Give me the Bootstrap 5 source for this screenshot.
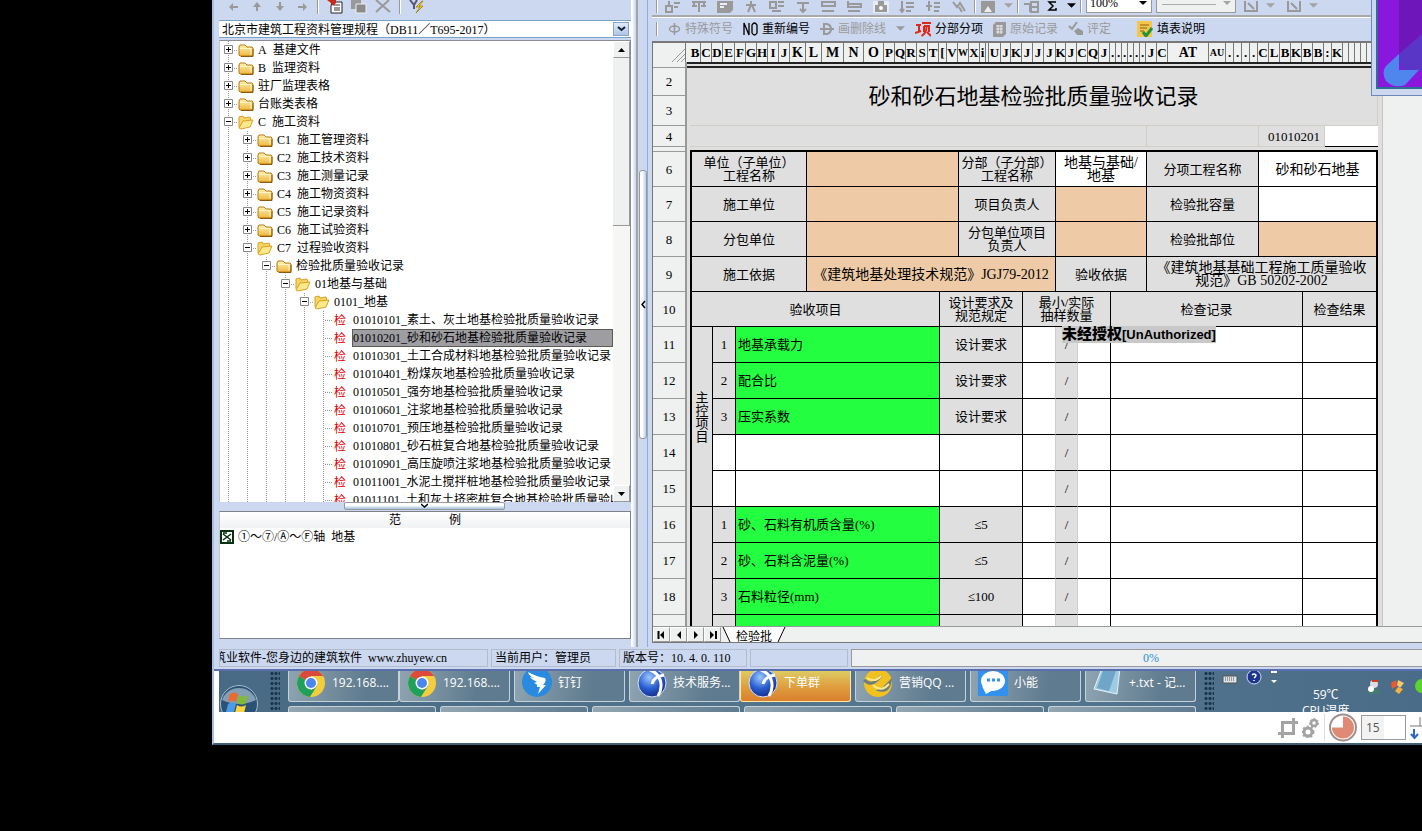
<!DOCTYPE html>
<html lang="zh-CN">
<head>
<meta charset="utf-8">
<meta name="viewport" content="width=device-width, initial-scale=1">
<title>砂和砂石地基检验批质量验收记录</title>
<link href="https://cdn.jsdelivr.net/npm/bootstrap@5.3.0/dist/css/bootstrap.min.css" rel="stylesheet">
<style>
:root{--face:#ccd8f0;--paper:#dfdfdf;--ctl:#eef1f0;--edge:#9a9a9a;--peach:#eecaa6;--go:#23fe40}
body{background:#000;margin:0;overflow:hidden;color:#000;font:12px/18px "Liberation Serif","Noto Sans CJK SC",serif}
a{color:inherit;text-decoration:none}
button{font:inherit;color:inherit;background:none;border:0;padding:0}
svg{display:block;flex:none}
.desk{height:calc(100vh - 86px);margin-left:212px;border-left:2px solid #a9bfe0;border-bottom:2px solid #3f5f78;background:#fff;position:relative;overflow:hidden}
.app{background:var(--face);padding-left:5px;min-height:0}
.status-row{background:var(--face);border-bottom:2px solid #5b6fae;height:24px;padding:1px 0 1px 5px}
.pane-left{width:412px}
.tools-left{height:20px;padding:0 8px 6px;gap:8px}
.combo{height:18px;border-top:1px solid #7ba3c8;border-bottom:1px solid #7ba3c8;border-radius:0;background:#fff}
.combo select,.zoomsel,.linesel{appearance:none;border:0;background:transparent;font:inherit;padding:0 3px;outline:0;color:#000}
.combo .drop{width:16px;height:14px;margin:1px 2px 1px 0;background:linear-gradient(#e2ebfa,#adc4e6);border:1px solid #8aa4cc}
.tree{margin-top:2px;border:1px solid #8c8c94;border-left-color:#c4c8cc;border-bottom:0;background:#fff;min-height:0}
.tree-list{min-width:0;overflow:hidden;margin:0 0 0 -1px;padding:0;list-style:none;white-space:nowrap}
.tree-list a{display:flex;height:18px;align-items:stretch}
.tree-list .txt{padding-left:4px}
.leaf .txt{margin-left:5px;padding:0 1px;flex:1;overflow:hidden}
.leaf.on .txt{background:#9e9da2;box-shadow:inset 0 0 0 1px #5b5b54}
.guide{width:19px;flex:none;background:repeating-linear-gradient(#999 0 1px,#fff 1px 2px) 9px 0/1px 100% no-repeat}
.guide.arm{background:repeating-linear-gradient(#999 0 1px,#fff 1px 2px) 9px 0/1px 100% no-repeat,repeating-linear-gradient(90deg,#999 0 1px,#fff 1px 2px) 9px 9px/10px 1px no-repeat}
.tick{color:#e00000;width:14px;flex:none;padding-left:1px;line-height:20px}
.sbar{width:17px;flex:none;background:#f6f6f5}
.sbar button,.navbtn{width:17px;height:17px;background:var(--ctl);border:1px solid #fff;border-right-color:#999;border-bottom-color:#999}
.sbar .thumb{height:168px;background:var(--ctl);border-right:1px solid #999;border-bottom:1px solid #999}
.grab-h{height:9px;flex:none}
.grab-h div{width:161px;height:8px;margin-left:125px;border:1px solid #999;border-radius:2px;background:linear-gradient(#fff 40%,#9fbfe0)}
.sample{height:128px;flex:none;border:1px solid #808088;border-left-color:#c4c8cc;background:#fff;margin-bottom:8px}
.sample h2{font:inherit;height:16px;line-height:16px;margin:0;background:linear-gradient(#fff,#f0f1f3);gap:48px}
.divider{width:21px;flex:none}
.divider .rail{width:7px;border-left:1px solid #fff;border-right:2px solid #a5a5a5;background:linear-gradient(90deg,#fff,#c3d3ee)}
.divider .slot{width:10px;border-right:1px solid #91abd8}
.divider .knob{margin:170px 0 0 1px;height:269px;border:1px solid #999;border-radius:3px;background:linear-gradient(90deg,#fff 40%,#b4cbe8)}
.pane-right{min-width:0}
.tb-one{height:15px;overflow:hidden;padding:0 4px 2px;gap:7px;color:#a3a3a3}
.icon-run{gap:10px}
.vsep{width:2px;height:14px;flex:none;background:#999;border-right:1px solid #fff}
.zoombox{height:20px;border:1px solid #999;background:#fff;width:66px}
.linebox{height:20px;border:1px solid #999;background:linear-gradient(#aaa,#aaa) 5px 10px/54px 1px no-repeat var(--ctl);width:80px}
.tb-two{height:26px;border-top:2px solid #a9a9ac;padding:0 4px;gap:10px;color:#9a9a9a;box-shadow:inset 0 1px #fff;white-space:nowrap}
.tb-two button{display:flex;align-items:center;gap:4px}
.tb-two .live{color:#000}
.sheet-frame{border-left:1px solid #777;border-top:2px solid #777;background:var(--ctl);min-height:0;margin-bottom:4px}
.heads{height:19px;background:var(--ctl);flex:none;overflow:hidden;font:bold 13px/19px "Liberation Serif",serif}
.heads span{flex:none;display:flex;justify-content:center;overflow:hidden;border-right:1px solid #777}
.heads .wide{font-size:14px}
.heads .snug{font-size:10px}
.heads .corner{width:33px}
.heads .pad{width:4px;border:0}
.view{min-height:0;overflow:hidden;flex:1 1 0}
.page-area{width:730px;background:var(--paper);border-right:1px solid #c8c4be}
.grid{table-layout:fixed;width:725px;border-collapse:separate;border-spacing:0;font-size:13px;line-height:13px;text-align:center;color:#000}
.grid td,.grid th{padding:0;vertical-align:middle;font-weight:400;overflow:hidden}
.grid tr>*{height:35px}
.grid td{border-right:1px solid #000;border-bottom:1px solid #000}
.grid th{background:var(--ctl);border-right:2px solid #999;border-bottom:1px solid #999}
.grid tr.tall>*{height:36px}
.grid tr.r1>*{height:6px}
.grid tr.r2>*{height:28px}
.grid tr.r3>*{height:30px}
.grid tr.r4>*{height:21px}
.grid tr.r5>*{height:5px}
.grid td.rule{border-top:2px solid #222;border-bottom:2px solid #222;border-right:0}
.grid td.none{border:0}
.grid td.faint{border-color:#d2cdc6}
.grid td.first{border-left:2px solid #000}
.grid td.last{border-right:2px solid #000}
.grid td.over{border-right:0;border-bottom-width:2px}
.grid .p{background:var(--peach)}
.grid .g{background:var(--go);text-align:left;padding-left:2px}
.grid .w{background:#fff}
.grid .k{font-size:14px}
.grid td.nb{border-right-color:#d2cdc6}
.grid .caption-cell{font-size:22px;line-height:26px}
.grid td.host{position:relative;overflow:visible}
.stamp{position:absolute;left:6px;top:-1px;background:#c8c8c8;font:bold 13px/16px "Liberation Sans","Noto Sans CJK SC",sans-serif;white-space:nowrap;z-index:2}
.stamp b{font-size:15px}
.tabs{height:17px;flex:none;border-top:1px solid #999;border-bottom:1px solid #777}
.tabs .navbtn{height:15px}
.cellbox{height:18px;border:1px solid #b3bccb;white-space:nowrap;overflow:hidden;padding-left:3px;line-height:17px;flex:none;margin-right:3px}
.meter{height:18px;border:1px solid #999;border-right:0;border-radius:0;background:var(--ctl);color:#2a8fdc;padding-left:28px;font-size:12px}
.taskbar{height:41px;flex:none;margin-left:5px;background:linear-gradient(90deg,#496a85,#55778f 60%,#4b6c88);overflow:hidden;color:#fff;font:12px/20px "Open Sans","Noto Sans CJK SC",sans-serif}
.taskbar>*{flex:none}
.grip{width:10px;background:radial-gradient(circle,#17324a 1px,transparent 2px) 0 0/4px 5px}
.task{width:111px;height:31px;border:1px solid #c5d2da;border-top:0;border-radius:0 0 3px 3px;background:linear-gradient(100deg,#8fa4b1,#5f7b8f 70%);gap:6px;padding:0 0 6px 7px;white-space:nowrap;display:flex;align-items:center;overflow:hidden}
.task.hot{background:linear-gradient(#dccb62,#e0a040 50%,#d97f2e);border-color:#ffe9a0}
.task-lo{height:6px;flex:1;border:1px solid #c5d2da;border-bottom:0;border-radius:3px 3px 0 0;background:linear-gradient(90deg,#93a6b2,#5f7b8f)}
.gauge{line-height:16px}
.strip{flex:none;height:31px;margin-left:5px;background:#fff;gap:4px}
.strip .bar{width:1px;height:27px;background:#ddd}
.strip .form-control{width:45px;height:25px;border:1px solid #999;border-radius:0;padding:0 4px;font:12px/20px "Open Sans",sans-serif;color:#555;background:linear-gradient(90deg,#f3f3f3 22px,#fff 22px)}
.popup{position:absolute;right:0;top:0;width:51px;height:96px;background:var(--face);border:1px solid #6f87b5;border-top:0;border-right:0;padding:0 0 5px 4px}
.popup svg{border-left:2px solid #2b6f95;border-bottom:2px solid #2b6f95}
</style>
</head>
<body>
<svg width="0" height="0" class="position-absolute">
 <defs>
  <linearGradient id="gold" x1="0" y1="0" x2="0" y2="1"><stop offset="0" stop-color="#fff3b4"/><stop offset="1" stop-color="#eeb640"/></linearGradient>
  <radialGradient id="sky" cx=".4" cy=".3" r=".8"><stop offset="0" stop-color="#9cc8ff"/><stop offset=".5" stop-color="#2a5ed0"/><stop offset="1" stop-color="#10207a"/></radialGradient>
  <symbol id="closed" viewBox="0 0 16 18"><path d="M1 14V6l1-2h5l2 2h5l1 1v7l-1 1H2z" fill="url(#gold)" stroke="#b9770e"/><path d="M2 7.500h11v6" fill="none" stroke="#fff6c8"/><path d="M3 15.500h12V8" fill="none" stroke="#8a5a10"/></symbol>
  <symbol id="open" viewBox="0 0 16 18"><path d="M1 14V4l4-1 1 2 6-1 1 3" fill="#f6d564" stroke="#d9a126"/><path d="M1 15l4-7 10-1-3 7-9 2z" fill="#fbe88a" stroke="#d9a126"/></symbol>
  <symbol id="chrome" viewBox="0 0 30 30"><circle cx="15" cy="15" r="14" fill="#f4cd3c"/><path d="M15 15L2.900 8a14 14 0 0 1 24.200 0z" fill="#db4a3b"/><path d="M15 15L2.900 8a14 14 0 0 0 11 21l7-11z" fill="#1fa15c"/><path d="M27.100 8H15v14z" fill="#f4cd3c"/><circle cx="15" cy="15" r="6.500" fill="#fff"/><circle cx="15" cy="15" r="5" fill="#4b85ee"/></symbol>
  <symbol id="globe" viewBox="0 0 30 30"><circle cx="15" cy="15" r="14" fill="url(#sky)" stroke="#d5e2ff"/><path d="M13 2c11 4 14 16 8 26M27 7c-7 1-11 5-12 9" stroke="#fff" stroke-width="3" fill="none"/></symbol>
  <symbol id="down" viewBox="0 0 10 6"><path d="M0 0h10L5 5z" fill="currentColor"/></symbol>
 </defs>
</svg>

<main class="desk d-flex flex-column">
 <div class="app d-flex flex-grow-1">
  <section class="pane-left d-flex flex-column flex-shrink-0">
   <div class="tools-left d-flex align-items-center">
    <button aria-label="后退"><svg width="14" height="10"><path d="M2 5l4-4v3h5v2H6v3z" fill="#999"/></svg></button>
    <button aria-label="上移"><svg width="16" height="10"><path d="M8 0l4 5H9v4H7V5H4z" fill="#999"/></svg></button>
    <button aria-label="下移"><svg width="14" height="10"><path d="M7 9L3 4h3V0h2v4h3z" fill="#999"/></svg></button>
    <button aria-label="前进"><svg width="14" height="10"><path d="M12 5L8 1v3H3v2h5v3z" fill="#999"/></svg></button>
    <span class="vsep"></span>
    <button aria-label="新建"><svg width="16" height="14"><path d="M5 2h10v11H4V6z" fill="#fff" stroke="#222"/><path d="M7 5h6M7 8h6M7 10h6" stroke="#333"/><path d="M0 0h9v3L6 6 4 3z" fill="#c8281a"/></svg></button>
    <button aria-label="复制"><svg width="16" height="14"><path d="M0 0h10v9H0z" fill="#999"/><path d="M5 4h10v9H5z" fill="#8b8b8b" stroke="#eee"/></svg></button>
    <button aria-label="删除"><svg width="16" height="14"><path d="M1 0l14 12M14 0L1 12" stroke="#999" stroke-width="2"/></svg></button>
    <span class="vsep"></span>
    <button aria-label="筛选"><svg width="16" height="14"><path d="M1 0l4 5v4M8 0L5 5" stroke="#557" stroke-width="2" fill="none"/><path d="M13 1L7 7h4l-4 6 7-7h-4l4-5z" fill="#ffd42a" stroke="#907000" stroke-width=".7"/></svg></button>
   </div>
   <div class="combo d-flex">
    <select class="flex-grow-1" aria-label="资料管理规程"><option>北京市建筑工程资料管理规程（DB11／T695-2017）</option></select>
    <button class="drop d-flex align-items-center justify-content-center" aria-label="展开"><svg width="9" height="6"><path d="M1 1l3.500 3L8 1" stroke="#123" stroke-width="2" fill="none"/></svg></button>
   </div>
   <div class="tree d-flex flex-grow-1">
    <ul class="tree-list flex-grow-1" id="tree"></ul>
    <div class="sbar d-flex flex-column">
     <button class="d-flex align-items-center justify-content-center" aria-label="向上滚动"><svg width="7" height="4"><path d="M0 4h7L3.500 0z"/></svg></button>
     <div class="thumb"></div>
     <button class="mt-auto d-flex align-items-center justify-content-center" aria-label="向下滚动"><svg width="7" height="4"><path d="M0 0h7L3.500 4z"/></svg></button>
    </div>
   </div>
   <div class="grab-h"><div class="d-flex justify-content-center"><svg width="7" height="5"><path d="M0 1l3.500 3L7 1" stroke="#000" stroke-width="1.500" fill="none"/></svg></div></div>
   <div class="sample">
    <h2 class="d-flex justify-content-center"><span>范</span><span>例</span></h2>
    <a href="#" class="d-flex align-items-center gap-1"><svg width="14" height="14"><path d="M1 1h12v12H1z" fill="#fff" stroke="#0a3010" stroke-width="2"/><path d="M3 4l8 6M11 4l-8 6M3 3h4M7 11h4" stroke="#0a3010" stroke-width="1.500"/></svg><span>①～⑦/Ⓐ～Ⓕ轴&nbsp; 地基</span></a>
   </div>
  </section>

  <div class="divider d-flex">
   <div class="rail"></div>
   <div class="slot"><div class="knob d-flex align-items-center"><svg width="7" height="9"><path d="M5 1L2 4.500 5 8" stroke="#000" stroke-width="1.500" fill="none"/></svg></div></div>
  </div>

  <section class="pane-right d-flex flex-column flex-grow-1">
   <div class="tb-one d-flex align-items-end">
    <span class="vsep"></span>
    <div class="icon-run d-flex align-items-end">
     <svg width="16" height="12"><path d="M1 5h6v6H1zM9 2h6M9 6h4M4 0v4" stroke="#999" stroke-width="2" fill="none"/></svg>
     <svg width="16" height="12"><path d="M1 1h14M3 1v4M8 1v10M13 1v4M1 5h5M10 5h5" stroke="#999" stroke-width="2" fill="none"/></svg>
     <svg width="16" height="12"><path d="M0 0h16v9l-3 3H0z" fill="#999"/><path d="M3 3h7M3 6h4" stroke="#eee" stroke-width="2"/></svg>
     <svg width="16" height="12"><path d="M8 0v4M3 4h10M8 4L5 11M9 4l3 7" stroke="#999" stroke-width="2" fill="none"/></svg>
     <svg width="16" height="12"><path d="M1 1h6v6H1zM9 1h6M9 5h6M3 10h9" stroke="#999" stroke-width="2" fill="none"/></svg>
     <svg width="16" height="12"><path d="M2 2h12M8 2v8M5 8l3 3 3-3" stroke="#999" stroke-width="2" fill="none"/></svg>
     <svg width="16" height="12"><path d="M1 0v5h13V1H1M1 10h12" stroke="#999" stroke-width="2" fill="none"/></svg>
     <svg width="16" height="12"><path d="M1 0v6h13V3H1M1 10h12" stroke="#999" stroke-width="2" fill="none"/></svg>
     <svg width="16" height="12"><path d="M0 0h16v12H0z" fill="#e6ebf4"/><path d="M2 4h12v7H2zM5 0h6v4H5z" fill="#999"/><circle cx="8" cy="7" r="2" fill="#fff"/></svg>
     <svg width="16" height="12"><path d="M3 0v10M1 8l2 3 2-3M7 2h8M7 6h8M7 10h5" stroke="#999" stroke-width="2" fill="none"/></svg>
     <svg width="16" height="12"><path d="M4 0v10M1 5h6M9 2h6M9 6h6M9 10h5" stroke="#999" stroke-width="2" fill="none"/></svg>
     <svg width="16" height="12"><path d="M2 1l4 5 3-4 5 8M8 6l3 5" stroke="#999" stroke-width="2" fill="none"/></svg>
    </div>
    <div class="d-flex align-items-end gap-1">
     <span class="vsep"></span>
     <svg width="16" height="12"><path d="M1 0h14v12H1z" fill="#999"/><path d="M4 11l4-6 4 6z" fill="#eee"/></svg>
     <svg width="9" height="10" class="ms-1"><use href="#down" width="9" height="6"/></svg>
     <span class="vsep"></span>
     <svg width="16" height="12"><path d="M1 3h6v8M8 1h7v10H8zM8 6h7" stroke="#999" stroke-width="2" fill="none"/></svg>
     <button class="text-black ms-1" aria-label="求和"><svg width="12" height="12"><path d="M9 7v2H2l4-4-4-4h7" fill="none" stroke="#000" stroke-width="1.500"/></svg></button>
     <svg width="9" height="10" class="text-black ms-1"><use href="#down" width="9" height="6"/></svg>
     <span class="vsep"></span>
     <div class="zoombox d-flex align-items-center"><select class="zoomsel flex-grow-1" aria-label="显示比例"><option>100%</option></select><svg width="8" height="5" class="me-1 text-black"><use href="#down" width="8" height="5"/></svg></div>
     <div class="linebox d-flex align-items-center"><select class="linesel flex-grow-1" aria-label="线型"><option></option></select><svg width="8" height="5" class="me-1"><use href="#down" width="8" height="5"/></svg></div>
     <svg width="14" height="12" class="ms-1"><path d="M1 0v10h12V0M4 2l6 6" stroke="#999" stroke-width="2" fill="none"/></svg>
     <svg width="9" height="10" class="mx-1"><use href="#down" width="9" height="6"/></svg>
     <svg width="14" height="12" class="ms-1"><path d="M1 0v10h12V0M4 2l6 6" stroke="#999" stroke-width="2" fill="none"/></svg>
     <svg width="9" height="10" class="ms-1"><use href="#down" width="9" height="6"/></svg>
    </div>
   </div>
   <div class="tb-two d-flex align-items-center">
    <span class="vsep"></span>
    <button><svg width="13" height="14"><ellipse cx="6.500" cy="7" rx="5" ry="3" fill="none" stroke="#999" stroke-width="1.500"/><path d="M6.500 1v12" stroke="#999" stroke-width="1.500"/></svg>特殊符号</button>
    <button class="live"><svg width="15" height="16"><path d="M1 14V2l5 12V2M9 4q2.500-4 5 0v8q-2.500 4-5 0z" fill="none" stroke="#000" stroke-width="1.300"/></svg>重新编号</button>
    <button><svg width="14" height="14"><path d="M4 2v10h3q4-1 4-5T7 2zM0 7h14" fill="none" stroke="#999" stroke-width="2"/></svg>画删除线</button>
    <svg width="9" height="6"><use href="#down" width="9" height="6"/></svg>
    <button class="live"><svg width="16" height="16"><path d="M1 4h5M4 4v7M0 12l6-2M7 2h9M9 5h5v6M9 5v6M11.500 6q0 6-5 9M12 11l4 4" stroke="#e02818" stroke-width="2" fill="none"/></svg>分部分项</button>
    <button><svg width="13" height="15"><path d="M3 0h10v12l-3 3H0V3z" fill="#999"/><path d="M3 4h7M3 7h7M3 10h7M5 3v9M8 3v9" stroke="#e8ecf4"/></svg>原始记录</button>
    <button><svg width="15" height="14"><path d="M1 4l3 3 5-7" stroke="#999" stroke-width="2" fill="none"/><path d="M6 9l4-3 5 3v4H9z" fill="#999"/></svg>评定</button>
    <button class="live ms-3"><svg width="16" height="16"><path d="M0 0h15v16H0z" fill="#f2c74d"/><path d="M3 4h9M3 7h7M3 10h4" stroke="#8a5c10"/><path d="M6 11l3 4 6-8" stroke="#259238" stroke-width="3" fill="none"/></svg>填表说明</button>
   </div>
   <div class="sheet-frame d-flex flex-column flex-grow-1">
    <div class="heads d-flex" id="heads"><span class="corner justify-content-end align-items-end"><svg width="13" height="13"><path d="M0 13L13 0M5 13l8-8M9 13l4-4" stroke="#999"/></svg></span><span class="pad"></span></div>
    <div class="view">
     <div class="page-area">
     <table class="grid">
      <colgroup id="cols"></colgroup>
      <tbody>
       <tr class="r1"><th></th><td colspan="16" class="rule"></td></tr>
       <tr class="r2"><th>2</th><td class="none"></td><td colspan="15" rowspan="2" class="faint caption-cell">砂和砂石地基检验批质量验收记录</td></tr>
       <tr class="r3"><th>3</th><td class="none"></td></tr>
       <tr class="r4"><th>4</th><td class="none"></td><td colspan="10" class="faint"></td><td colspan="2" class="faint"></td><td colspan="2" class="faint text-end pe-1">01010201</td><td class="w border-end-0"></td></tr>
       <tr class="r5"><th></th><td class="none"></td><td colspan="15" class="over"></td></tr>
       <tr><th>6</th><td class="none"></td><td colspan="3" class="first">单位（子单位）<br>工程名称</td><td colspan="2" class="p"></td><td colspan="2">分部（子分部）<br>工程名称</td><td colspan="3" class="w k">地基与基础/<br>地基</td><td colspan="2">分项工程名称</td><td colspan="3" class="w k last">砂和砂石地基</td></tr>
       <tr><th>7</th><td class="none"></td><td colspan="3" class="first">施工单位</td><td colspan="2" class="p"></td><td colspan="2">项目负责人</td><td colspan="3" class="p"></td><td colspan="2">检验批容量</td><td colspan="3" class="w last"></td></tr>
       <tr><th>8</th><td class="none"></td><td colspan="3" class="first">分包单位</td><td colspan="2" class="p"></td><td colspan="2">分包单位项目<br>负责人</td><td colspan="3" class="p"></td><td colspan="2">检验批部位</td><td colspan="3" class="p last"></td></tr>
       <tr><th>9</th><td class="none"></td><td colspan="3" class="first">施工依据</td><td colspan="4" class="p k">《建筑地基处理技术规范》JGJ79-2012</td><td colspan="3">验收依据</td><td colspan="5" class="k last">《建筑地基基础工程施工质量验收<br>规范》GB 50202-2002</td></tr>
       <tr><th>10</th><td class="none"></td><td colspan="4" class="first">验收项目</td><td colspan="2">设计要求及<br>规范规定</td><td colspan="3">最小/实际<br>抽样数量</td><td colspan="4">检查记录</td><td colspan="2" class="last">检查结果</td></tr>
       <tr class="tall"><th>11</th><td class="none"></td><td rowspan="5" class="first">主<br>控<br>项<br>目</td><td>1</td><td colspan="2" class="g">地基承载力</td><td colspan="2">设计要求</td><td class="w nb"></td><td class="nb host">/<span class="stamp"><b>未经授权</b>[UnAuthorized]</span></td><td class="w"></td><td colspan="4" class="w"></td><td colspan="2" class="w last"></td></tr>
       <tr class="tall"><th>12</th><td class="none"></td><td>2</td><td colspan="2" class="g">配合比</td><td colspan="2">设计要求</td><td class="w nb"></td><td class="nb">/</td><td class="w"></td><td colspan="4" class="w"></td><td colspan="2" class="w last"></td></tr>
       <tr class="tall"><th>13</th><td class="none"></td><td>3</td><td colspan="2" class="g">压实系数</td><td colspan="2">设计要求</td><td class="w nb"></td><td class="nb">/</td><td class="w"></td><td colspan="4" class="w"></td><td colspan="2" class="w last"></td></tr>
       <tr class="tall"><th>14</th><td class="none"></td><td class="w"></td><td colspan="2" class="w"></td><td colspan="2" class="w"></td><td class="w nb"></td><td class="nb">/</td><td class="w"></td><td colspan="4" class="w"></td><td colspan="2" class="w last"></td></tr>
       <tr class="tall"><th>15</th><td class="none"></td><td class="w"></td><td colspan="2" class="w"></td><td colspan="2" class="w"></td><td class="w nb"></td><td class="nb">/</td><td class="w"></td><td colspan="4" class="w"></td><td colspan="2" class="w last"></td></tr>
       <tr class="tall"><th>16</th><td class="none"></td><td rowspan="4" class="first"></td><td>1</td><td colspan="2" class="g">砂、石料有机质含量(%)</td><td colspan="2">≤5</td><td class="w nb"></td><td class="nb">/</td><td class="w"></td><td colspan="4" class="w"></td><td colspan="2" class="w last"></td></tr>
       <tr class="tall"><th>17</th><td class="none"></td><td>2</td><td colspan="2" class="g">砂、石料含泥量(%)</td><td colspan="2">≤5</td><td class="w nb"></td><td class="nb">/</td><td class="w"></td><td colspan="4" class="w"></td><td colspan="2" class="w last"></td></tr>
       <tr class="tall"><th>18</th><td class="none"></td><td>3</td><td colspan="2" class="g">石料粒径(mm)</td><td colspan="2">≤100</td><td class="w nb"></td><td class="nb">/</td><td class="w"></td><td colspan="4" class="w"></td><td colspan="2" class="w last"></td></tr>
       <tr class="tall"><th></th><td class="none"></td><td></td><td colspan="2" class="g"></td><td colspan="2"></td><td class="w nb"></td><td class="nb"></td><td class="w"></td><td colspan="4" class="w"></td><td colspan="2" class="w last"></td></tr>
      </tbody>
     </table>
     </div>
    </div>
    <div class="tabs d-flex">
     <button class="navbtn" aria-label="首页"><svg width="15" height="13"><path d="M4.500 3v8" stroke="#000" stroke-width="2"/><path d="M6 7l4-4v8z"/></svg></button>
     <button class="navbtn" aria-label="上一页"><svg width="15" height="13"><path d="M6 7l4-4v8z"/></svg></button>
     <button class="navbtn" aria-label="下一页"><svg width="15" height="13"><path d="M10 7L6 3v8z"/></svg></button>
     <button class="navbtn" aria-label="末页"><svg width="15" height="13"><path d="M9 7L5 3v8z"/><path d="M11 3v8" stroke="#000" stroke-width="2"/></svg></button>
     <svg width="15" height="15"><path d="M2 0h13v15H9z" fill="#fff"/><path d="M2 0l7 15" stroke="#000"/></svg>
     <a href="#" class="bg-white lh-1 pt-1" aria-current="page">检验批</a>
     <svg width="14" height="15"><path d="M0 0h13L6 15H0z" fill="#fff"/><path d="M13 0L6 15" stroke="#000"/></svg>
    </div>
   </div>
  </section>
 </div>

 <footer class="status-row d-flex flex-shrink-0 align-items-center">
  <div class="cellbox" style="width:269px;text-indent:-9px">筑业软件-您身边的建筑软件 &nbsp;www.zhuyew.cn</div>
  <div class="cellbox" style="width:125px">当前用户：管理员</div>
  <div class="cellbox" style="width:128px">版本号：10. 4. 0. 110</div>
  <div class="cellbox" style="width:98px"></div>
  <div class="progress meter flex-grow-1 justify-content-center align-items-center" role="progressbar" aria-valuenow="0">0%</div>
 </footer>

 <nav class="taskbar d-flex">
  <button aria-label="开始"><svg width="51" height="41" viewBox="0 0 51 41"><circle cx="20" cy="33" r="18.500" fill="#2a5276" stroke="#a5bccb"/><path d="M3 29a18 18 0 0 1 34 0q-17 8-34 0" fill="#c1d2dc" opacity=".6"/><path d="M11 23q4-3 8 0l-2 8q-4-3-8 0z" fill="#ee6a2c"/><path d="M20 24q5 3 9 0l-2 8q-4 3-9 0z" fill="#7fba38"/><path d="M9 33q4-3 8 0l-2 8H7z" fill="#4a9be8"/><path d="M18 34q4 3 9 0l-2 8h-9z" fill="#fcd43c"/></svg></button>
  <div class="grip"></div>
  <div class="d-flex flex-column gap-1 ms-2">
   <div class="d-flex">
    <div class="d-flex me-1"><button class="task"><svg width="30" height="30"><use href="#chrome"/></svg>192.168....</button><button class="task"><svg width="30" height="30"><use href="#chrome"/></svg>192.168....</button></div>
    <button class="task me-1"><svg width="30" height="30"><circle cx="15" cy="14" r="15" fill="#2a8ae0"/><path d="M6 4q9 5 17 6 2 3-2 7h3l-8 9 2-7h-3q1-3-3-4l3-1q-6-3-7-5l4 1Q7 8 6 4z" fill="#fff"/></svg>钉钉</button>
    <div class="d-flex me-1"><button class="task"><svg width="30" height="30"><use href="#globe"/></svg>技术服务...</button><button class="task hot"><svg width="30" height="30"><use href="#globe"/></svg>下单群</button></div>
    <button class="task me-1"><svg width="30" height="30"><circle cx="15" cy="15" r="14" fill="#f1c21f"/><path d="M1 12q7 6 12 1l5-5M17 22q8 2 10-8l-6 6z" stroke="#6c7d83" stroke-width="3" fill="none"/><path d="M4 10q8 5 14-2M10 17q8 8 16-1" stroke="#ffe98a" stroke-width="2" fill="none"/></svg>营销QQ ...</button>
    <button class="task me-1"><svg width="30" height="30"><path d="M0 0h30v28H0z" fill="#3290ee"/><ellipse cx="15" cy="13" rx="12" ry="10" fill="#fff"/><path d="M4 18l4 8 7-4z" fill="#fff"/><path d="M9 12h3M14 12h3M19 12h3" stroke="#3290ee" stroke-width="3"/></svg>小能</button>
    <button class="task"><svg width="30" height="30"><path d="M9 0h18l-3 26L1 21z" fill="#9fcbe2" stroke="#e5f3fa"/><path d="M10 3h13l-7 20-12-3z" fill="#6fa5c6"/></svg>+.txt - 记...</button>
   </div>
   <div class="d-flex gap-1"><div class="task-lo"></div><div class="task-lo"></div><div class="task-lo"></div><div class="task-lo"></div><div class="task-lo"></div><div class="task-lo bg-light"></div></div>
  </div>
  <div class="grip ms-2 me-2"></div>
  <div class="d-flex gap-2 align-items-start"><svg width="16" height="16"><path d="M1 5h14v7H1z" fill="#dde5ea" stroke="#555"/><path d="M3 7h10M3 9h10" stroke="#555" stroke-dasharray="1 1"/></svg>
   <svg width="16" height="16"><circle cx="8" cy="6" r="7" fill="#1b3590" stroke="#d5dcf0"/><path d="M6 4q2-2 4 0 0 2-2 3M8 9v1" stroke="#fff" stroke-width="1.500" fill="none"/></svg><svg width="8" height="14"><path d="M1 0h6v2H1zM1 9h6L4 12z" fill="#fff"/></svg></div>
  <div class="gauge d-flex flex-column align-items-center ms-4 pt-3"><span>59℃</span><span>CPU温度</span></div>
  <div class="d-flex gap-2 pt-2 ms-3"><svg width="16" height="16"><circle cx="8" cy="5" r="4" fill="#ddd"/><path d="M1 15q2-7 7-6 6 0 7 6z" fill="#447b70"/><circle cx="5" cy="10" r="3" fill="#fff"/><path d="M6 2h6" stroke="#d63a22" stroke-width="2"/></svg><svg width="16" height="16"><path d="M1 4l5-3 1 6-5 3z" fill="#e85a32"/><path d="M8 1l6 3-4 5-3-3z" fill="#f8c76a"/><path d="M8 8l5 2-4 5-4-3z" fill="#f6b23c"/></svg><svg width="10" height="16"><circle cx="8" cy="7" r="7" fill="#5bd52e"/></svg></div>
 </nav>

 <div class="strip d-flex align-items-center justify-content-end">
  <button aria-label="裁剪"><svg width="20" height="20"><path d="M20 4.500H4.500V20M0 15.500h15.500V0" stroke="#a3a3a3" stroke-width="3" fill="none"/></svg></button>
  <button aria-label="设置"><svg width="18" height="20"><circle cx="6" cy="14" r="4" fill="none" stroke="#a3a3a3" stroke-width="3" /><circle cx="6" cy="14" r="5.500" fill="none" stroke="#a3a3a3" stroke-dasharray="2 2" stroke-width="2"/><circle cx="12" cy="5" r="3" fill="none" stroke="#a3a3a3" stroke-width="2.500"/><circle cx="12" cy="5" r="4.500" fill="none" stroke="#a3a3a3" stroke-dasharray="2 2"/></svg></button>
  <span class="bar"></span>
  <svg width="28" height="29"><circle cx="14" cy="14.500" r="13" fill="#fff" stroke="#a08f8f" stroke-width="2"/><path d="M14 14.500V3.500a11 11 0 1 1-11 11z" fill="#df8a74"/></svg>
  <input class="form-control" value="15" aria-label="帧率">
  <svg width="12" height="26"><path d="M0 11h12M10 2v9" stroke="#777"/><path d="M4 14v9M1 19l3.500 4L8 19" stroke="#2c66c8" stroke-width="2" fill="none"/></svg>
 </div>

 <aside class="popup" aria-label="浮动窗口"><svg width="46" height="89" viewBox="0 0 44 87" preserveAspectRatio="none"><path d="M0 0h44v87H0z" fill="#8a18dc"/><path d="M21 0h23v70H30l-9-10z" fill="#6f16b8"/><path d="M44 34v36H25l-4-8V54z" fill="#5a36c6"/><path d="M21 54v16h20L27 85q-11 4-19-4-5-9 0-15z" fill="#4f86ee"/></svg></aside>
</main>

<script src="https://cdn.jsdelivr.net/npm/bootstrap@5.3.0/dist/js/bootstrap.bundle.min.js"></script>
<script>
// Grid columns: row number, margin, then the form's own columns.
const widths=[34,3,23,23,71,133,19,64,33,22,33,36,11,101,44,22,53];
document.getElementById('cols').innerHTML=widths.map(w=>`<col style="width:${w}px">`).join('');

// Column headings, each with its width; narrow columns only have room for a dot.
const heads='B11 C11 D11 E12 F11 G11 H11 I11 J11 K16 L16 M22 N20 O20 P11 Q11 R11 S11 T11 [8 V11 W11 X11 i6 _3 U12 J10 K11 J11 J11 J12 K10 J11 C11 Q11 J11 .6 .6 .6 .6 .6 .6 J11 C11 AT41 AU17 .8 .8 .8 .8 C11 L11 B11 K11 B11 B11 :8 K11 _6 _6 _6 _6 _6';
document.getElementById('heads').insertAdjacentHTML('beforeend',heads.split(' ').map(h=>{
 const [,t,w]=h.match(/(\D+)(\d+)/);
 const size=t==='W'||t==='AU'?'snug':w>15?'wide':'';
 return `<span class="${size}" style="width:${w}px">${t==='_'?'':t}</span>`;
}).join(''));

// Document tree: depth, state (+ closed, - open, = open with a closed folder), label.
const rows=[[0,'+','A\u00a0 基建文件'],[0,'+','B\u00a0 监理资料'],[0,'+','驻厂监理表格'],[0,'+','台账类表格'],[0,'-','C\u00a0 施工资料'],
[1,'+','C1\u00a0 施工管理资料'],[1,'+','C2\u00a0 施工技术资料'],[1,'+','C3\u00a0 施工测量记录'],[1,'+','C4\u00a0 施工物资资料'],[1,'+','C5\u00a0 施工记录资料'],[1,'+','C6\u00a0 施工试验资料'],[1,'-','C7\u00a0 过程验收资料'],
[2,'=','检验批质量验收记录'],[3,'-','01地基与基础'],[4,'-','0101_地基'],
'01010101_素土、灰土地基检验批质量验收记录','01010201_砂和砂石地基检验批质量验收记录','01010301_土工合成材料地基检验批质量验收记录','01010401_粉煤灰地基检验批质量验收记录','01010501_强夯地基检验批质量验收记录','01010601_注浆地基检验批质量验收记录','01010701_预压地基检验批质量验收记录','01010801_砂石桩复合地基检验批质量验收记录','01010901_高压旋喷注浆地基检验批质量验收记录','01011001_水泥土搅拌桩地基检验批质量验收记录','01011101_土和灰土挤密桩复合地基检验批质量验收记录'];
const guide='<i class="guide"></i>';
document.getElementById('tree').innerHTML=rows.map((r,i)=>{
 if(typeof r==='string')return `<li><a href="#" class="leaf ${i===16?'on':''}">${guide.repeat(5)}<i class="guide arm"></i><span class="tick">检</span><span class="txt">${r}</span></a></li>`;
 const [d,s,t]=r;
 return `<li><a href="#">${guide.repeat(d)}<i class="guide arm"><svg width="19" height="18"><path d="M5.500 4.500h8v8h-8z" fill="#fff" stroke="#888"/><path d="M7 8.500h5${s==='+'?'M9.500 6v5':''}" stroke="#000"/></svg></i><svg width="16" height="18"><use href="#${s==='-'?'open':'closed'}"/></svg><span class="txt">${t}</span></a></li>`;
}).join('');
</script>
</body>
</html>
